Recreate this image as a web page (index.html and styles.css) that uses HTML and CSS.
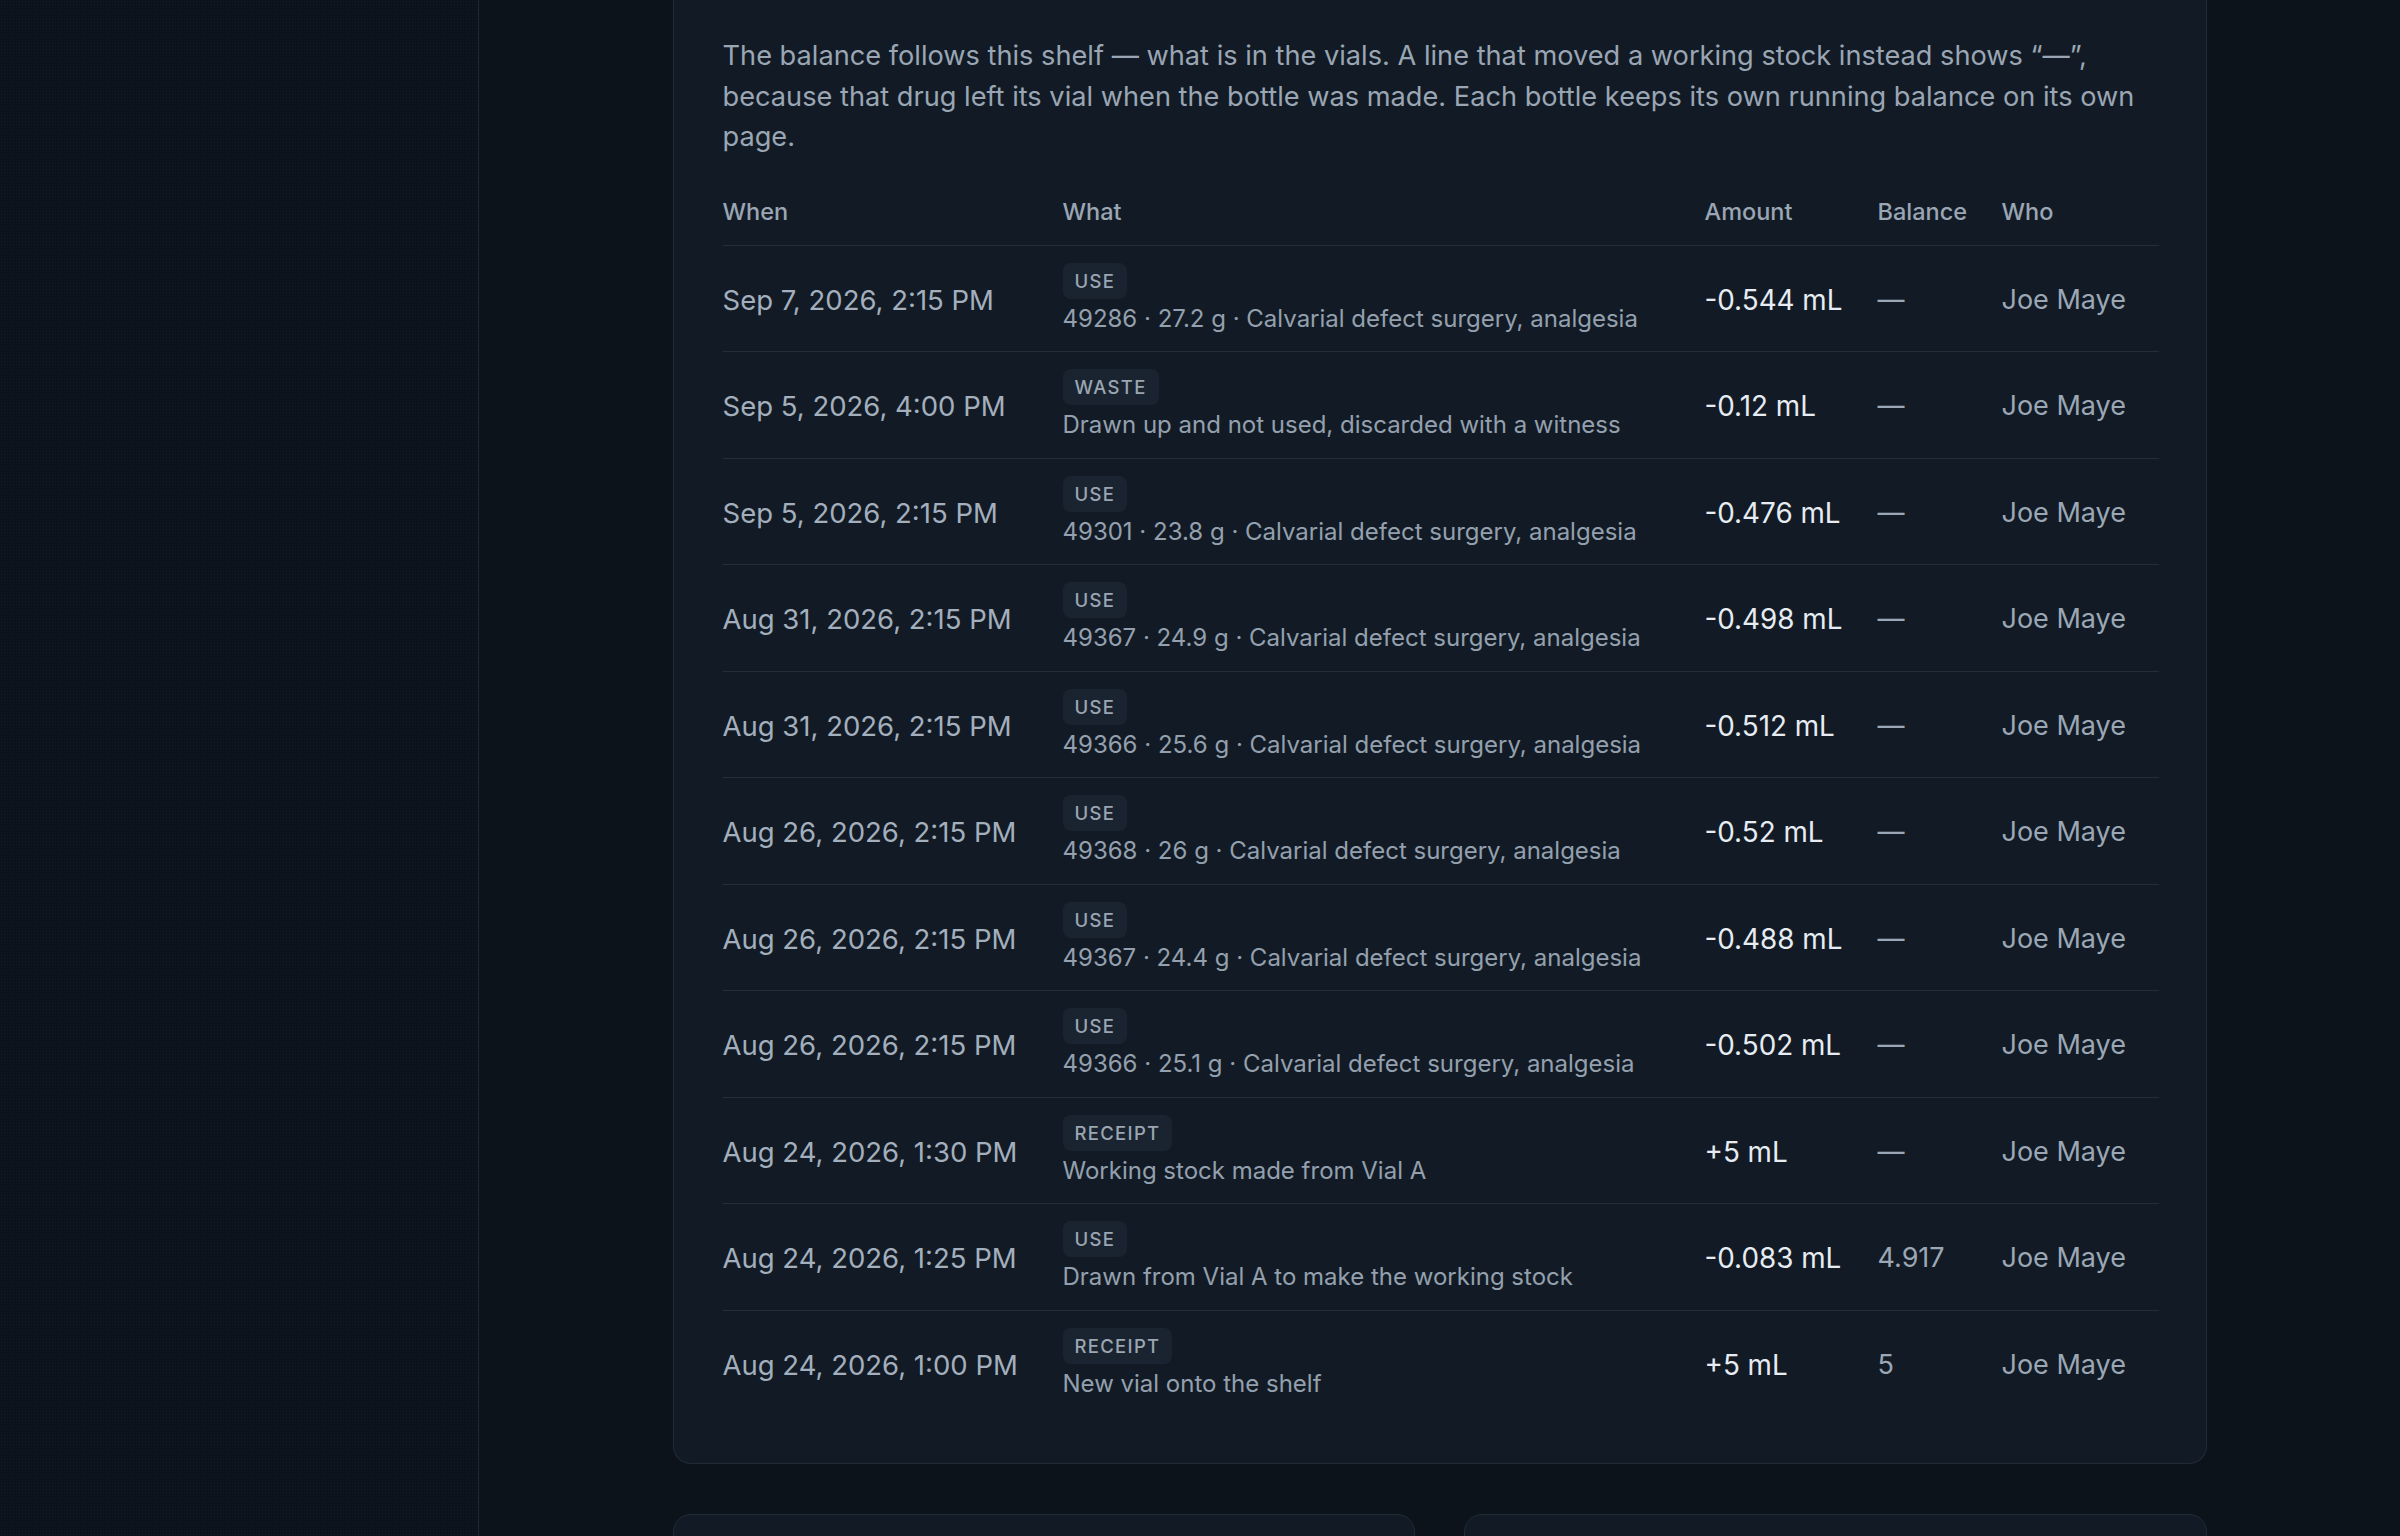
FILE: index.html
```html
<!DOCTYPE html>
<html lang="en">
<head>
<meta charset="utf-8">
<title>Ledger</title>
<link rel="stylesheet" href="styles.css">
</head>
<body>
<div class="app">
  <aside class="sidebar"></aside>
  <main class="main">
    <div class="container">
      <section class="card ledger">
        <p class="note">The balance follows this shelf — what is in the vials. A line that moved a working stock instead shows “—”, because that drug left its vial when the bottle was made. Each bottle keeps its own running balance on its own page.</p>
        <table class="tbl">
          <colgroup>
            <col class="c-when"><col class="c-what"><col class="c-amt"><col class="c-bal"><col class="c-who">
          </colgroup>
          <thead>
            <tr><th>When</th><th>What</th><th>Amount</th><th>Balance</th><th>Who</th></tr>
          </thead>
          <tbody>
            <tr><td class="when">Sep 7, 2026, 2:15 PM</td><td><div class="what"><span class="badge">Use</span><span class="desc">49286 · 27.2 g · Calvarial defect surgery, analgesia</span></div></td><td class="amt">-0.544 mL</td><td class="bal">—</td><td class="who">Joe Maye</td></tr>
            <tr><td class="when">Sep 5, 2026, 4:00 PM</td><td><div class="what"><span class="badge">Waste</span><span class="desc">Drawn up and not used, discarded with a witness</span></div></td><td class="amt">-0.12 mL</td><td class="bal">—</td><td class="who">Joe Maye</td></tr>
            <tr><td class="when">Sep 5, 2026, 2:15 PM</td><td><div class="what"><span class="badge">Use</span><span class="desc">49301 · 23.8 g · Calvarial defect surgery, analgesia</span></div></td><td class="amt">-0.476 mL</td><td class="bal">—</td><td class="who">Joe Maye</td></tr>
            <tr><td class="when">Aug 31, 2026, 2:15 PM</td><td><div class="what"><span class="badge">Use</span><span class="desc">49367 · 24.9 g · Calvarial defect surgery, analgesia</span></div></td><td class="amt">-0.498 mL</td><td class="bal">—</td><td class="who">Joe Maye</td></tr>
            <tr><td class="when">Aug 31, 2026, 2:15 PM</td><td><div class="what"><span class="badge">Use</span><span class="desc">49366 · 25.6 g · Calvarial defect surgery, analgesia</span></div></td><td class="amt">-0.512 mL</td><td class="bal">—</td><td class="who">Joe Maye</td></tr>
            <tr><td class="when">Aug 26, 2026, 2:15 PM</td><td><div class="what"><span class="badge">Use</span><span class="desc">49368 · 26 g · Calvarial defect surgery, analgesia</span></div></td><td class="amt">-0.52 mL</td><td class="bal">—</td><td class="who">Joe Maye</td></tr>
            <tr><td class="when">Aug 26, 2026, 2:15 PM</td><td><div class="what"><span class="badge">Use</span><span class="desc">49367 · 24.4 g · Calvarial defect surgery, analgesia</span></div></td><td class="amt">-0.488 mL</td><td class="bal">—</td><td class="who">Joe Maye</td></tr>
            <tr><td class="when">Aug 26, 2026, 2:15 PM</td><td><div class="what"><span class="badge">Use</span><span class="desc">49366 · 25.1 g · Calvarial defect surgery, analgesia</span></div></td><td class="amt">-0.502 mL</td><td class="bal">—</td><td class="who">Joe Maye</td></tr>
            <tr><td class="when">Aug 24, 2026, 1:30 PM</td><td><div class="what"><span class="badge">Receipt</span><span class="desc">Working stock made from Vial A</span></div></td><td class="amt">+5 mL</td><td class="bal">—</td><td class="who">Joe Maye</td></tr>
            <tr><td class="when">Aug 24, 2026, 1:25 PM</td><td><div class="what"><span class="badge">Use</span><span class="desc">Drawn from Vial A to make the working stock</span></div></td><td class="amt">-0.083 mL</td><td class="bal">4.917</td><td class="who">Joe Maye</td></tr>
            <tr><td class="when">Aug 24, 2026, 1:00 PM</td><td><div class="what"><span class="badge">Receipt</span><span class="desc">New vial onto the shelf</span></div></td><td class="amt">+5 mL</td><td class="bal">5</td><td class="who">Joe Maye</td></tr>
          </tbody>
        </table>
      </section>
      <div class="pair">
        <section class="card small"></section>
        <section class="card small"></section>
      </div>
    </div>
  </main>
</div>
</body>
</html>
```
FILE: styles.css
```css
* { box-sizing: border-box; }
html, body { margin: 0; padding: 0; height: 100%; }
body {
  background: #0d131a;
  font-family: Inter, "Noto Sans", sans-serif;
  color: #9ba7b5;
  overflow: hidden;
}
.app {
  display: flex;
  height: 1536px;
}
.sidebar {
  width: 479px;
  flex: none;
  background-color: #0b121b;
  background-image: radial-gradient(rgba(40, 56, 74, 0.25) 0.6px, transparent 0.9px);
  background-size: 3px 3px;
  border-right: 1px solid #1e2935;
}
.main {
  flex: 1;
  background: #0d131a;
}
.container {
  width: 1534px;
  margin: 0 auto;
  display: flex;
  flex-direction: column;
  gap: 50px;
}
.card {
  background: #121b25;
  border: 1px solid #212c39;
  border-radius: 18px;
}
.ledger {
  border-top: none;
  border-top-left-radius: 0;
  border-top-right-radius: 0;
  padding: 36px 48px 47px 49px;
}
.note {
  margin: 0 0 31px;
  font-size: 27.2px;
  line-height: 40.5px;
  color: #9aa6b4;
}
.tbl {
  width: 100%;
  table-layout: fixed;
  border-collapse: collapse;
}
.c-when { width: 340px; }
.c-what { width: 642px; }
.c-amt { width: 173px; }
.c-bal { width: 124px; }
.c-who { width: 157px; }
.tbl th {
  text-align: left;
  font-size: 23.5px;
  font-weight: 500;
  line-height: 36px;
  color: #9aa6b4;
  padding: 5px 0 15px;
  border-bottom: 1px solid #222e3b;
}
.tbl td {
  padding: 17px 0 14.5px;
  vertical-align: middle;
  font-size: 27px;
  line-height: 36px;
  border-bottom: 1px solid #222e3b;
}
.tbl tbody tr:last-child td { border-bottom: none; }
.tbl td.when { color: #a3afbd; font-size: 27.5px; }
.tbl td.amt { color: #e6ecf2; font-size: 27.8px; }
.bal { color: #9ba7b5; }
.who { color: #9ba7b5; }
.what {
  display: flex;
  flex-direction: column;
  align-items: flex-start;
  gap: 2px;
}
.badge {
  display: block;
  background: #1a2430;
  border-radius: 8px;
  padding: 0 12px;
  height: 36px;
  line-height: 36px;
  font-size: 18.5px;
  font-weight: 500;
  letter-spacing: 0.07em;
  text-transform: uppercase;
  color: #9ba6b2;
}
.desc {
  display: block;
  font-size: 24px;
  line-height: 36px;
  color: #94a0ae;
}
.pair {
  display: grid;
  grid-template-columns: 1fr 1fr;
  gap: 49px;
}
.small {
  height: 200px;
}
```
